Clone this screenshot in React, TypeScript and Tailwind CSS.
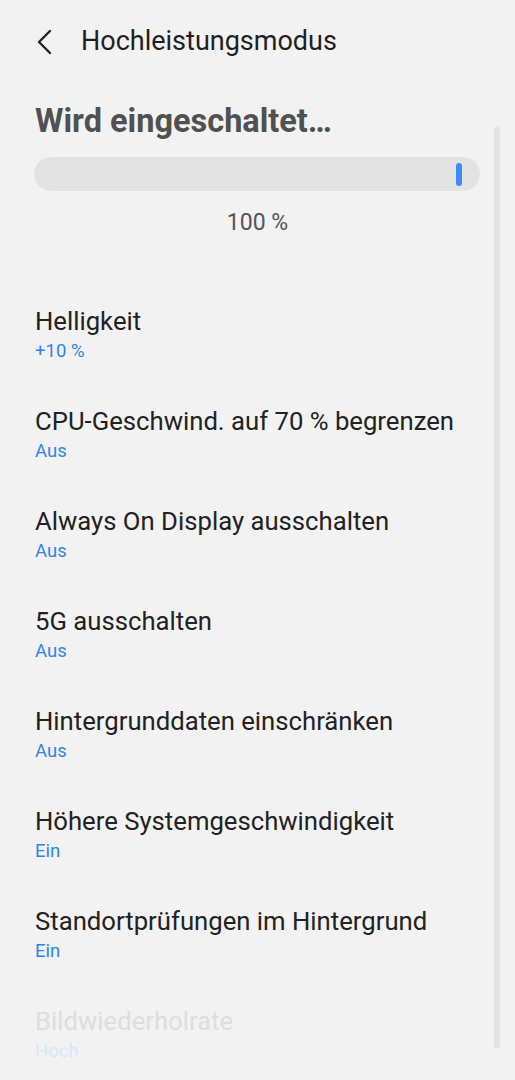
const items = [
  { title: "Helligkeit", value: "+10 %" },
  { title: "CPU-Geschwind. auf 70 % begrenzen", value: "Aus" },
  { title: "Always On Display ausschalten", value: "Aus" },
  { title: "5G ausschalten", value: "Aus" },
  { title: "Hintergrunddaten einschränken", value: "Aus" },
  { title: "Höhere Systemgeschwindigkeit", value: "Ein" },
  { title: "Standortprüfungen im Hintergrund", value: "Ein" },
];

export default function App() {
  return (
    <div
      className="relative h-[1080px] w-[515px] overflow-hidden bg-[#f2f2f2]"
      style={{ fontFamily: "Roboto, 'Noto Sans', sans-serif" }}
    >
      {/* header */}
      <div className="flex h-[82px] items-center pl-[35px]">
        <svg width="20" height="26" viewBox="0 0 20 26" className="mt-[1px]">
          <path d="M15 2 L4 13 L15 24" fill="none" stroke="#222" strokeWidth="2.4" strokeLinecap="round" strokeLinejoin="round" />
        </svg>
        <span className="ml-[26px] text-[27px] leading-[30px] text-[#1f1f1f]">Hochleistungsmodus</span>
      </div>

      <div className="px-[34px]">
        <div className="mt-[21px] pl-[1px] text-[32.5px] font-bold leading-[36px] text-[#505050]">Wird eingeschaltet…</div>
        <div className="relative mt-[18px] h-[34px] w-[446px] rounded-full bg-[#e3e3e3]">
          <div className="absolute right-[18px] top-[6px] h-[23px] w-[6px] rounded-full bg-[#3b8cf5]" />
        </div>
        <div className="mt-[18px] text-center text-[23px] leading-[28px] text-[#555]">100 %</div>
      </div>

      <div className="mt-[47px]">
        {items.map((it) => (
          <div key={it.title} className="px-[35px] pb-[22px] pt-[22px]">
            <div className="text-[25.7px] leading-[30px] text-[#222]">{it.title}</div>
            <div className="mt-[4px] text-[18.5px] leading-[22px] text-[#2f86e2]">{it.value}</div>
          </div>
        ))}
        <div className="px-[35px] pb-[22px] pt-[22px]">
          <div className="text-[25.7px] leading-[30px] text-[#dedede]">Bildwiederholrate</div>
          <div className="mt-[4px] text-[18.5px] leading-[22px] text-[#dae7f6]">Hoch</div>
        </div>
      </div>

      {/* scrollbar overlay */}
      <div className="absolute left-[494px] top-[127px] h-[921px] w-[6px] rounded-full bg-[#e2e2e2]" />
    </div>
  );
}
